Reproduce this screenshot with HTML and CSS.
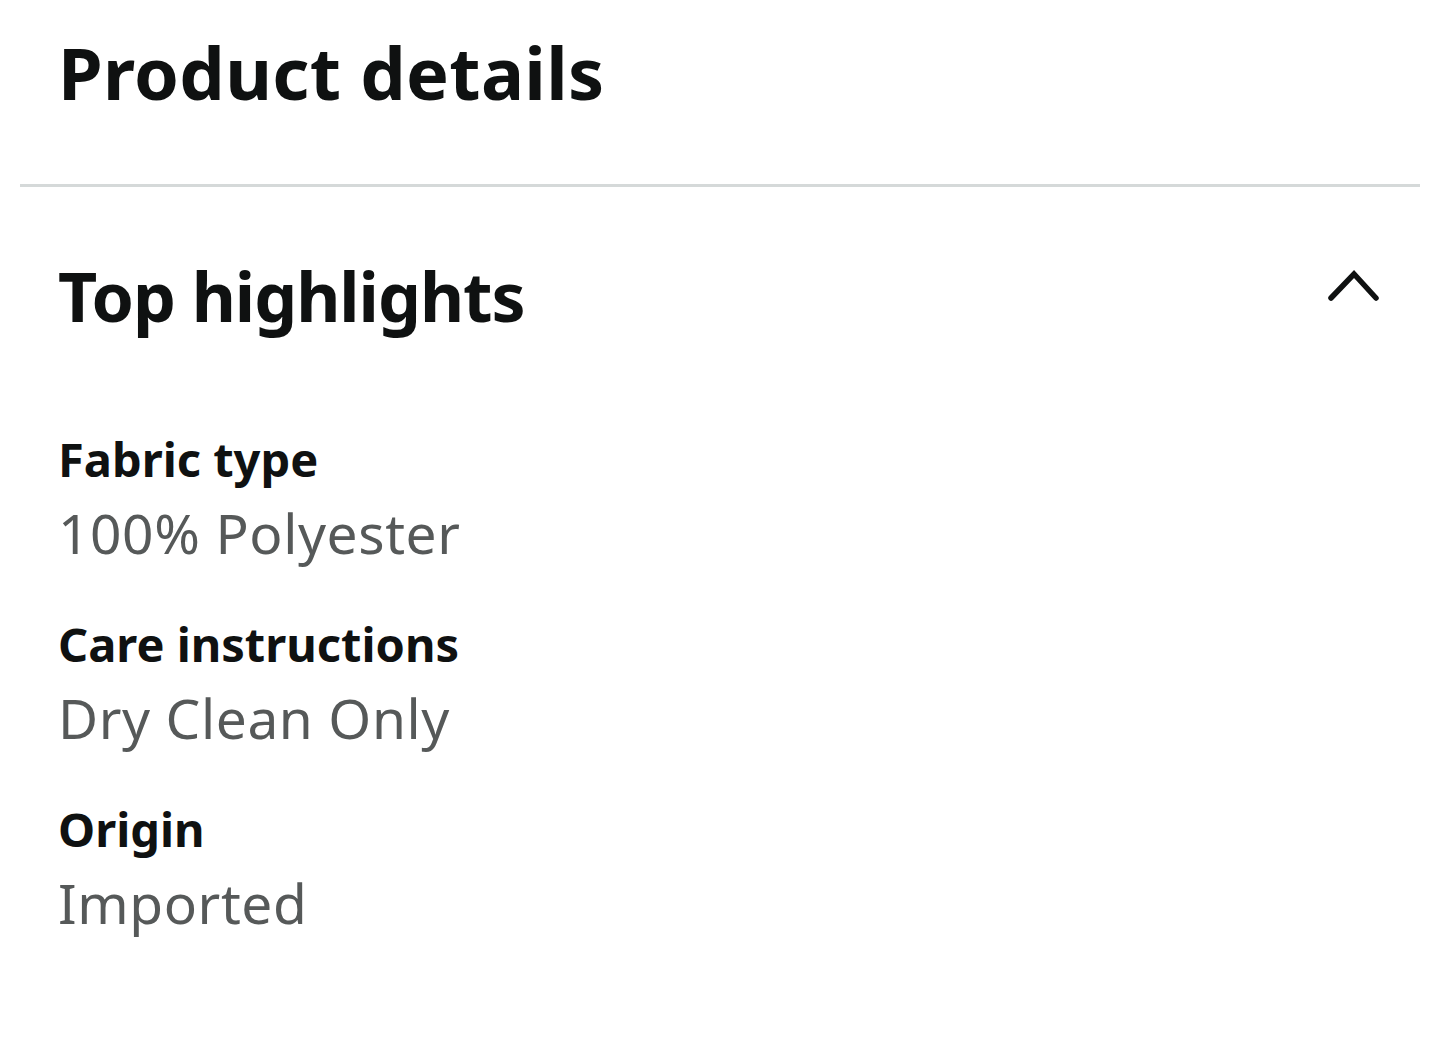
FILE: index.html
```html
<!DOCTYPE html>
<html lang="en">
<head>
<meta charset="utf-8">
<title>Product details</title>
<link rel="stylesheet" href="styles.css">
</head>
<body>
<main class="page">
  <header class="page-header">
    <h1 class="page-title">Product details</h1>
  </header>
  <hr class="divider">
  <section class="section">
    <div class="section-head">
      <h2 class="section-title">Top highlights</h2>
      <svg class="chevron" viewBox="0 0 60 40" width="60" height="40" aria-hidden="true">
        <polyline points="7,31 30,7 52,31" fill="none" stroke="#0f1111" stroke-width="5.5" stroke-linecap="round" stroke-linejoin="miter"/>
      </svg>
    </div>
    <dl class="attrs">
      <div class="attr">
        <dt class="attr-label">Fabric type</dt>
        <dd class="attr-value">100% Polyester</dd>
      </div>
      <div class="attr">
        <dt class="attr-label">Care instructions</dt>
        <dd class="attr-value">Dry Clean Only</dd>
      </div>
      <div class="attr">
        <dt class="attr-label">Origin</dt>
        <dd class="attr-value">Imported</dd>
      </div>
    </dl>
  </section>
</main>
</body>
</html>
```

FILE: styles.css
```css
html, body {
  margin: 0;
  padding: 0;
  background: #ffffff;
}

body {
  font-family: "Noto Sans", "Open Sans", Arial, sans-serif;
  color: #0f1111;
}

.page {
  width: 1440px;
}

.page-header {
  padding: 22px 58px 0;
  height: 184px;
  box-sizing: border-box;
}

.page-title {
  margin: 0;
  font-size: 72px;
  line-height: 100px;
  font-weight: 700;
  letter-spacing: 0.3px;
}

.divider {
  margin: 0 20px;
  border: 0;
  height: 3px;
  background: #d5d9d9;
}

.section {
  padding: 0 56px 0 58px;
}

.section-head {
  display: flex;
  align-items: center;
  justify-content: space-between;
  height: 235px;
}

.section-title {
  margin: 0 0 17px;
  font-size: 68px;
  line-height: 100px;
  font-weight: 700;
  letter-spacing: -1px;
}

.chevron {
  display: block;
  margin-bottom: 36px;
}

.attrs {
  margin: 0;
  display: flex;
  flex-direction: column;
  gap: 37px;
}

.attr {
  display: flex;
  flex-direction: column;
}

.attr-label {
  font-size: 47px;
  line-height: 74px;
  font-weight: 700;
  color: #0f1111;
}

.attr-value {
  margin: 0;
  font-size: 55px;
  line-height: 74px;
  font-weight: 400;
  letter-spacing: 0.6px;
  color: #565959;
}
```
